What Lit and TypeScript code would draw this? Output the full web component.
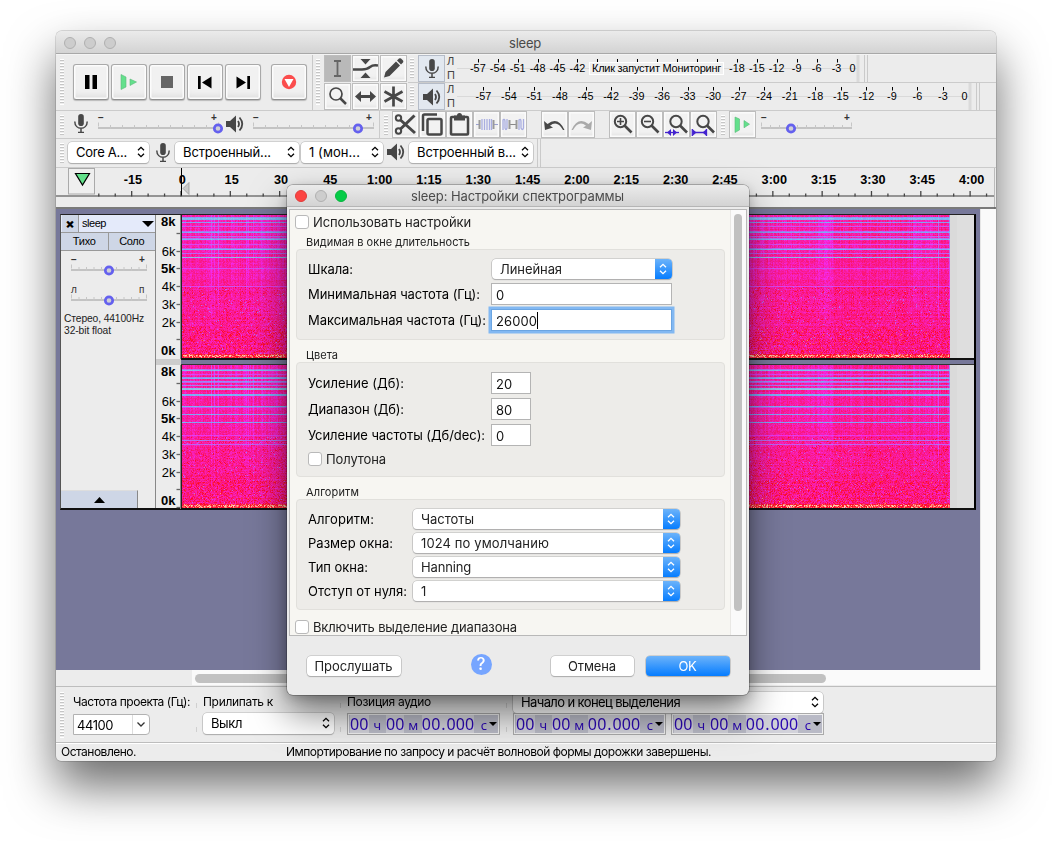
import { LitElement, html, svg, css, nothing } from "lit";
import { customElement, property } from "lit/decorators.js";

/** Text whose tracking is tuned so that it spans the given width. */
const t = (text: string, w: number, cls = "") =>
  html`<span class="fit ${cls}" data-w=${w}>${text}</span>`;

const range = (n: number) => Array.from({ length: n }, (_, i) => i);

const STOPS = [
  [200, 212, 200],
  [115, 178, 246],
  [246, 40, 236],
  [255, 8, 30],
  [255, 245, 200],
];

@customElement("spectro-gram")
class SpectroGram extends LitElement {
  @property({ type: Number }) seed = 1;
  @property({ attribute: false }) bands: number[][] = [];

  static styles = css`
    :host { display: block; width: 768px; height: 143px; }
    canvas { display: block; }
  `;

  render() {
    return html`<canvas width="768" height="143"></canvas>`;
  }

  firstUpdated() {
    const cv = this.renderRoot.querySelector("canvas")!;
    const g = cv.getContext("2d")!;
    const W = 768, H = 143;
    const img = g.createImageData(W, H);
    let s = this.seed * 7919;
    const rnd = () => {
      s = (s * 1664525 + 1013904223) >>> 0;
      return s / 4294967296;
    };
    const col = range(W).map((x) => {
      let v = (rnd() - 0.5) * 0.06;
      if ([29, 32, 36].includes(x)) v -= 0.11;
      if ([49, 64, 66, 71, 79, 80].includes(x)) v -= 0.05;
      if (x > 60 && x < 95) v -= 0.012;
      if (x > 635 && x < 651) v -= 0.035;
      if (x > 651) v += 0.02;
      if (x > 730 && x < 754) v -= 0.025;
      if (x === 756) v -= 0.13;
      if (x > 766) v -= 0.18;
      return v;
    });
    const row = range(H).map(() => (rnd() - 0.5) * 0.045);
    const band = new Map(this.bands.map((b) => [b[0], b[1]]));
    for (let y = 0; y < H; y++) {
      const f = y / H;
      for (let x = 0; x < W; x++) {
        const fade = Math.max(0.2, 1 - f * 0.9);
        let v = 0.572 + f * 0.04 + row[y] + col[x] * (f < 0.7 ? fade * 1.3 : 0.3);
        v += (rnd() - 0.5) * (0.06 + f * 0.06);
        if (band.has(y)) v = band.get(y)! + col[x] * 0.5 + (rnd() - 0.5) * 0.09;
        else if (f > 0.5) {
          const r = rnd();
          if (r > 0.9) v += 0.1;
          if (r < 0.015) v -= 0.2;
        }
        if (f > 0.8 && rnd() > 0.78) v += 0.1 * rnd() + 0.04;
        if (f > 0.97) v += 0.1 + rnd() * 0.1;
        if (y > H - 4 && y < H - 1 && rnd() > 0.55) v += 0.14;
        v = Math.min(0.96, Math.max(0.14, v)) * 4;
        const i = Math.floor(v), k = v - i, o = (y * W + x) * 4;
        for (let c = 0; c < 3; c++)
          img.data[o + c] = STOPS[i][c] * (1 - k) + STOPS[i + 1][c] * k;
        img.data[o + 3] = 255;
      }
    }
    g.putImageData(img, 0, 0);
  }
}

const BANDS_L = [[2, 0.3], [3, 0.2], [4, 0.24], [7, 0.3], [11, 0.42], [16, 0.37], [17, 0.28], [21, 0.4], [23, 0.36], [24, 0.26], [29, 0.44], [33, 0.4], [34, 0.25], [38, 0.4], [42, 0.18], [53, 0.45], [71, 0.45]];
const BANDS_R = [[4, 0.36], [5, 0.2], [9, 0.44], [12, 0.32], [13, 0.26], [16, 0.32], [17, 0.4], [20, 0.35], [23, 0.2], [24, 0.15], [29, 0.24], [30, 0.26], [41, 0.25], [42, 0.42], [49, 0.27], [57, 0.27], [70, 0.47], [75, 0.37], [79, 0.4]];

const MIC = svg`<rect x="4.2" y="0" width="5.6" height="12" rx="2.8"/><path d="M.8 7.5c0 9 12.4 9 12.4 0M7 14v4M4 18.6h6" fill="none" stroke="currentColor" stroke-width="1.5"/>`;
const SPK = svg`<path d="M0 6h4l6-5.5v17L4 12H0z"/><path d="M12 6q2 3 0 6M13.5 2.5q5.500 6.500 0 13" fill="none" stroke="currentColor" stroke-width="1.8"/>`;
const mic = (c = "") => html`<svg class="ic ${c}" width="14" height="19" viewBox="0 0 14 19" fill="currentColor">${MIC}</svg>`;
const spk = (c = "") => html`<svg class="ic ${c}" width="18" height="18" viewBox="0 0 18 18" fill="currentColor">${SPK}</svg>`;
const ic = (body: unknown) => html`<svg class="ic" width="25" height="25" viewBox="0 0 25 25" fill="currentColor">${body}</svg>`;
const lens = svg`<circle cx="10.500" cy="9.500" r="5.700" fill="none" stroke="currentColor" stroke-width="2"/><path d="M14.500 13.500l7 7" stroke="currentColor" stroke-width="2.600"/>`;

const TOOLS = [
  svg`<path d="M9 5h7M12.500 5v15M9 20h7" fill="none" stroke="currentColor" stroke-width="1.800"/>`,
  svg`<path d="M7.500 3h10l-5 5.500zM7.500 22h10l-5-5.500z"/><path d="M0 13.500h9q5 0 8-2.500t8-1.500" fill="none" stroke="currentColor" stroke-width="2.500"/>`,
  svg`<path d="M3 21.500l1.500-5.500L15 5.500l4 4L8.500 20zM16 4.500l2-2q1-.7 2 0l2 2q.7 1 0 2l-2 2z"/>`,
  svg`<circle cx="11" cy="10" r="6" fill="none" stroke="currentColor" stroke-width="1.700"/><path d="M15 14l6 6" stroke="currentColor" stroke-width="2.500"/>`,
  svg`<path d="M2 12.500l6-5.500v4h9V7l6 5.500-6 5.500v-4H8v4z"/>`,
  svg`<path d="M12.500 2.500v20M3.500 7.500l18 10M21.500 7.500l-18 10" stroke="currentColor" stroke-width="2.700"/>`,
];

const EDIT = [
  svg`<g fill="none" stroke="currentColor"><circle cx="5.500" cy="6" r="2.700" stroke-width="2"/><circle cx="5.500" cy="19" r="2.700" stroke-width="2"/><path d="M7.500 8l14.500 13M7.500 17L21.500 3.500" stroke-width="3"/></g>`,
  svg`<g fill="none" stroke="currentColor" stroke-width="2.500"><rect x="7.500" y="7" width="14" height="15.500" rx="1.500"/><path d="M3 19V4q0-1.500 1.500-1.500H17"/></g>`,
  svg`<rect x="4" y="5" width="17" height="17.500" rx="1" fill="none" stroke="currentColor" stroke-width="2.500"/><path d="M7 3.500h3q0-2.500 2.500-2.500t2.500 2.500h3v5H7z"/>`,
  svg`<path d="M2 12.500h4M19 12.500h5" stroke="#9aa0d0"/><path d="M5.500 8v9M19.500 8v9" stroke="#999" stroke-width="2"/><path d="M8 7v11M10.500 7v11M13 7v11M15.500 7v11M17.500 7v11" stroke="#a9aee0" stroke-width="1.300"/>`,
  svg`<path d="M9 12.500h6" stroke="#888"/><path d="M8.500 8v9M15.500 8v9" stroke="#999" stroke-width="2"/><path d="M2 18V8q2-2 2 2v6q1 3 2 0V7M18 18V8q2-2 2 2v6q1.500 3 2.500 0V7" fill="none" stroke="#a9aee0" stroke-width="1.300"/>`,
];
const UNDO = svg`<path d="M2 9l1 9 8-2.500-3-1.700q7-6 13 4.200h1.500Q16 4 5.500 12z"/>`;
const REDO = svg`<path fill="#aaa" d="M23 9l-1 9-8-2.500 3-1.700q-7-6-13 4.200H2.500Q9 4 19.500 12z"/>`;
const ZOOM = [
  svg`${lens}<path d="M7 9.500h7M10.500 6v7" stroke="currentColor" stroke-width="1.600"/>`,
  svg`${lens}<path d="M7 9.500h7" stroke="currentColor" stroke-width="1.600"/>`,
  svg`<g transform="translate(1.500)">${lens}</g><g fill="#4322cf"><path d="M1 20.500h14" stroke="#4322cf" stroke-width="1.300"/><path d="M7 17v7L3 20.500zM9 17v7l4-3.500z"/></g>`,
  svg`<g transform="translate(1.500)">${lens}</g><g fill="#4322cf"><path d="M2 20.500h12M1.300 17v7M15.500 17v7" stroke="#4322cf" stroke-width="1.300"/><path d="M2 17.500l3.500 3L2 23.500zM15 17.500l-3.500 3 3.500 3z"/></g>`,
];
const PLAYSPEED = svg`<path fill="#63e08c" stroke="#5ab878" stroke-width=".6" d="M5 5l4.500 2v11L5 20.500zM14 8.500l5.500 3.700-5.500 3.600z"/>`;

const slider = (w: number, pos: number, n: number, minus = "−", plus = "+", cls = "") => html`
  <svg class="slider ${cls}" width=${w + 12} height="26" viewBox="-6 0 ${w + 12} 26">
    <text x="0" y="9.500" class="pm">${minus}</text>
    <text x=${w - 8} y="9.500" class="pm">${plus}</text>
    <path d="M0 17H${w}" stroke="#c3c3c3" stroke-width="2"/>
    ${range(n).map((i) => svg`<path d="M${0.5 + (i * (w - 1)) / (n - 1)} ${i % (n - 1) ? 14 : 11.5}v4" stroke="#c6c6c6"/>`)}
    <circle cx=${pos} cy="17.500" r="3.700" fill="#cfcfd8" stroke="#6460ee" stroke-width="2.700"/>
  </svg>`;

const chev = html`<svg class="chev" width="8" height="12" viewBox="0 0 8 12"><path d="M1 4.300L4 1.300l3 3M1 7.700l3 3 3-3" fill="none" stroke="currentColor" stroke-width="1.300"/></svg>`;
const popup = (w: number, text: string, tw: number, cls = "") => html`
  <div class="popup ${cls}" style="width:${w}px">${t(text, tw)}<i></i>${chev}</div>`;
const blueSelect = (w: number, text: string, tw: number) => html`
  <div class="bsel" style="width:${w}px">${t(text, tw)}<i></i><b>${chev}</b></div>`;

const meter = (w: number, zero: number, pitch: number, hidden: boolean) => html`
  <svg class="meter" width=${w} height="27">
    <path d="M0 13.500H${w}" stroke="#d9d9d9"/>
    ${range(20).map((i) => {
      const x = zero - (19 - i) * pitch;
      const v = (i - 19) * 3;
      return svg`<path d="M${Math.round(x) + 0.5} 4v${i === 19 ? 5 : 3.500}" stroke="#000"/>
        ${hidden && v > -42 && v < -18 ? nothing : svg`<text x=${v ? x : x - 4} y="16.500" text-anchor="middle">${v}</text>`}`;
    })}
    <path d="M${w} 0v27" stroke="#dadada" stroke-width="3"/>
  </svg>`;

const timeField = () => html`
  <div class="time">${[..."00ч00м00.000с"].map((c) =>
    /[чмс]/.test(c) ? html`<span class="u">${c}</span>` : html`<span class=${c === "." ? "dot" : "d"}>${c}</span>`)}<em></em></div>`;

const vruler = (ys: number[], ticks: number[]) => html`
  <svg class="vr" width="25" height="144">
    ${ys.map((y, i) => svg`<text x="19.500" y=${y + 4} text-anchor="end" class=${i === 0 || i === 2 || i === 6 ? "b" : ""}>${["8k", "6k", "5k", "4k", "3k", "2k", "0k"][i]}</text>`)}
    ${ticks.map((y) => svg`<path d="M20.500 ${y + 0.5}h4" stroke="#666" stroke-width="1.300"/>`)}
    <path d="M24.500 0v144" stroke="#888"/>
  </svg>`;

const check = (text: string, w: number, cls = "") => html`<div class="check ${cls}"><i></i>${t(text, w)}</div>`;

@customElement("app-root")
class AppRoot extends LitElement {
  static styles = css`
    :host { display: block; position: relative; width: 1052px; height: 841px; overflow: hidden; background: #fff; font: 13px/16px Inter, "Noto Sans", sans-serif; color: #000; }
    * { box-sizing: border-box; }
    .fit { display: inline-block; white-space: pre; }
    svg { display: block; flex: none; }
    .win { display: flex; flex-direction: column; width: 940px; height: 730px; margin: 31px 56px; border-radius: 6px 6px 5px 5px; background: #ececec; box-shadow: 0 0 0 .7px rgba(0,0,0,.18), 0 25px 48px rgba(0,0,0,.58); }
    :host::before { content: ""; display: table; }
    .tb { height: 23px; flex: none; display: flex; align-items: center; background: linear-gradient(#ebebeb, #d3d3d3); border-bottom: 1px solid #a8a8a8; border-radius: 6px 6px 0 0; padding-left: 8px; color: #4a4a4a; }
    .win > .tb { padding-top: 2px; }
    .tb .dot3 { width: 12px; height: 12px; border-radius: 50%; background: #cdcdcd; border: 1px solid #b0b0b0; margin-right: 8px; }
    .tb .ttl { margin-left: 385px; line-height: 22px; }
    .grip { flex: none; width: 4px; background: repeating-linear-gradient(#fff 0 1px, #c6c6c6 1px 2px, #ececec 2px 3px); }
    .ic { color: #474747; }
    .row { display: flex; flex: none; border-bottom: 1px solid #cbcbcb; }
    .r1 { height: 57px; border-top: 1px solid #f4f4f4; }
    .transport { width: 257px; display: flex; border-right: 1px solid #c8c8c8; padding-left: 4px; flex: none; }
    .transport .grip { height: 46px; margin: 4px 9px 0 0; }
    .big { width: 36px; height: 36px; margin: 9px 2px 0 0; border-radius: 3px; border: 1px solid #a9a9a9; border-bottom-color: #8f8f8f; background: #f1f1f1; box-shadow: inset 0 0 0 1.500px #fcfcfc, inset 0 -6px 6px -3px #dcdcdc, 0 1px 1px #bbb; display: flex; align-items: center; justify-content: center; }
    .big.rec { margin-left: 8px; }
    .tools { display: flex; padding-left: 3px; width: 95px; flex: none; }
    .tools .grip { height: 46px; margin: 4px 4px 0 0; }
    .tgrid { display: grid; grid-template-columns: repeat(3, 28px); grid-auto-rows: 28px; }
    .btn { width: 27px; height: 27px; border: 1px solid #bdbdbd; background: #f2f2f2; box-shadow: inset 0 0 0 1.500px #fbfbfb, inset 0 -4px 5px -2px #dedede; display: flex; align-items: center; justify-content: center; flex: none; }
    .btn.on { background: #b9b9b9; box-shadow: none; }
    .btn.on .ic { color: #666; }
    .meters { flex: 1; display: flex; flex-direction: column; }
    .mrow { height: 28px; display: flex; border-bottom: 1px solid #cbcbcb; position: relative; }
    .mrow:last-child { border: 0; }
    .mrow .grip { height: 21px; margin: 3px 4px 0 2px; }
    .mrow .btn { background: #e2e8f0; box-shadow: none; border-color: #b5bcc8; margin-right: 1px; }
    .lp { display: flex; flex-direction: column; justify-content: space-between; width: 11px; padding: 0 0 1px 1px; font: 11px/12px "Liberation Sans", sans-serif; color: #444; }
    .meter text { font: 10.800px "Liberation Sans", sans-serif; letter-spacing: .1px; }
    .meter { overflow: visible; }
    .hint { position: absolute; left: 181px; top: 7px; width: 135px; height: 13px; background: #f0f0f0; border: 1px solid #fff; font: 11px/11px "Liberation Sans", sans-serif; padding-left: 2px; }
    .ends { width: 4px; border: 1px solid #cacaca; border-width: 0 1px; margin-left: 6px; }
    .r2 { height: 28px; }
    .r2 .grip, .r3 .grip { height: 21px; margin: 4px 0 0 4px; }
    .slider { margin: 0 -6px; }
    .slider .pm { font: bold 10px "Liberation Sans", sans-serif; fill: #333; }
    .slider.pan .pm { font-weight: normal; }
    .r3 { height: 29px; }
    .popup { height: 21px; flex: none; border-radius: 4px; background: #fff; box-shadow: 0 0 0 .6px #b5b5b5, 0 1px 1px #a5a5a5; display: flex; align-items: center; padding: 0 4px 1px 8px; line-height: 20px; }
    .popup i, .bsel i { flex: 1; }
    .r3 .popup { margin-top: 3px; }
    .ruler { flex: none; height: 41px; display: block; }
    .ruler text { font: bold 12.700px "Liberation Sans", sans-serif; }
    .area { flex: none; height: 461px; display: flex; background: #77789a; }
    .tracks { width: 924px; padding: 5px 0 0 4px; }
    .vs { flex: 1; background: #fafafa; border-left: 1px solid #e6e6e6; }
    .track { width: 916px; height: 296px; border: 1px solid #222; border-right: 2px solid #000; border-left-color: #555; border-bottom: 2px solid #111; display: flex; background: #ececec; }
    .panel { width: 95px; flex: none; border-right: 1px solid #888; display: flex; flex-direction: column; font-family: "Liberation Sans", sans-serif; }
    .ph { height: 18px; display: flex; border-bottom: 1px solid #999; background: #e4eafa; padding-left: 1px; font-size: 11px; align-items: center; }
    .ph b { width: 17px; height: 17px; text-align: center; background: #ced6e6; border-right: 1px solid #999; font: 900 13px/17px Inter, sans-serif; }
    .ph .fit { margin-left: 3px; line-height: 15px; padding-bottom: 1px; }
    .ph svg { margin-left: auto; margin-right: 1px; }
    .ms { height: 18px; display: flex; border-bottom: 1px solid #999; background: #ced6e6; font-size: 11px; line-height: 17px; }
    .ms div { flex: 1; text-align: center; }
    .ms div + div { border-left: 1px solid #999; }
    .panel .slider { margin: 2px 0 0 4px; }
    .panel .slider + .slider { margin-top: 4px; }
    .info { font-size: 10.300px; line-height: 12px; padding: 4px 0 0 3px; color: #222; }
    .coll { margin-top: auto; width: 77px; height: 18px; background: #ced6e6; border-right: 1px solid #888; border-top: 1px solid #ddd; display: flex; align-items: center; justify-content: center; }
    .vrc { width: 25px; flex: none; }
    .vr text { font: 13px "Liberation Sans", sans-serif; }
    .vr text.b { font-weight: bold; }
    .gapv { height: 7px; background: #77789a; border-top: 2px solid #111; border-bottom: 1px solid #333; }
    .ch { display: flex; background: linear-gradient(90deg, #dadada 775px, #dedede 775px); height: 143px; border-left: 1px solid #222; }
    .hs { flex: none; height: 16px; padding-left: 136px; }
    .hs div { background: #fafafa; height: 15px; padding: 4px 3px; }
    .hs i { display: block; width: 631px; height: 8.500px; border-radius: 5px; background: #c1c1c1; }
    .sel { flex: none; height: 57px; border-top: 1px solid #bdbdbd; border-bottom: 1px solid #bdbdbd; display: flex; padding-left: 4px; font-size: 12px; }
    .sel > .grip { height: 46px; margin: 5px 9px 0 0; }
    .sel .popup, .combo { font-size: 13px; }
    .col { display: flex; flex-direction: column; flex: none; }
    .col > .fit { line-height: 15px; margin-top: 7px; align-self: flex-start; }
    .combo { width: 77px; height: 21px; margin-top: 5px; border: 1px solid #b2b2b2; border-radius: 0 4px 4px 0; background: #fff; display: flex; align-items: center; padding-left: 3px; }
    .combo b { margin-left: auto; width: 17px; height: 19px; border-left: 1px solid #ddd; display: flex; align-items: center; justify-content: center; }
    .sep { flex: none; width: 1px; height: 29px; margin-top: 16px; border-top: 5px solid #d0d0d0; border-bottom: 5px solid #d0d0d0; }
    .time { width: 153px; height: 22px; border: 1px solid #aaa; background: #b9bac6; box-shadow: inset 0 0 0 1px #f0f0f0; display: flex; align-items: center; padding: 0 0 0 2px; font: 16px/19px "Noto Sans", sans-serif; color: #2a07b0; }
    .time span { text-align: center; height: 18px; line-height: 18px; flex: none; }
    .time .d { width: 9.300px; background: #d2d2da; }
    .time .dot { width: 6px; background: #d2d2da; }
    .time .u { width: 17.300px; font-size: 13px; line-height: 20px; }
    .time .u:nth-last-child(2) { width: 15px; text-align: right; padding-right: 2px; }
    .time em { flex: none; border: 4px solid transparent; border-top: 4px solid #000; border-bottom: 0; }
    .times { display: flex; gap: 5px; margin-top: 1px; }
    .status { flex: 1; border-top: 1px solid #fff; display: flex; font-size: 12px; line-height: 15px; padding-left: 5px; }
    .s2 { margin-left: 150px; }

    .dlg { position: absolute; left: 287px; top: 185px; width: 462px; height: 510px; border-radius: 6px; background: #ebebeb; box-shadow: 0 0 0 .7px rgba(0,0,0,.3), 0 18px 36px rgba(0,0,0,.5), 0 3px 12px rgba(0,0,0,.2); display: flex; flex-direction: column; }
    .dlg .tb { height: 22px; border-color: #b5b5b5; }
    .dlg .tb .dot3:nth-child(1) { background: #fc4442; border-color: #e03c3a; }
    .dlg .tb .dot3:nth-child(3) { background: #05cc47; border-color: #08b53f; }
    .dlg .tb .ttl { margin-left: 56px; }
    .view { margin: 2px 2px 0 2px; height: 427px; border: 1px solid #b8b8b8; display: flex; background: #f7f6f2; overflow: hidden; flex: none; }
    .cont { width: 441px; padding: 5px 5px 0 5px; border-right: 1px solid #e9e8e5; flex: none; }
    .lane { flex: 1; background: #fafafa; padding: 4px 0 0 3px; }
    .lane i { display: block; width: 8px; height: 397px; border-radius: 4px; background: #c1c1c1; }
    .check { display: flex; height: 14px; line-height: 15px; color: #222; }
    .check i { width: 14px; height: 14px; border-radius: 3px; background: #fff; border: 1px solid #b9b9b9; margin-right: 4px; }
    .cap { font-size: 11px; line-height: 14px; margin: 6px 0 0 11px; height: 14px; color: #222; }
    .cap.n { margin-top: 8px; }
    .grp { margin-left: 1px; background: #edece9; border: 1px solid #e1e0dc; border-radius: 4px; padding: 9px 0 0 11px; }
    .g1 { height: 91px; } .g2 { height: 115px; } .g3 { height: 111px; }
    .f { display: grid; grid-template-columns: 183px auto; justify-content: start; justify-items: start; align-items: center; height: 22px; margin-bottom: 4px; }
    .f.s { height: 21px; margin-bottom: 3px; align-items: start; line-height: 20px; }
    .g1 .bsel { margin-left: .5px; }
    .g3 .f { grid-template-columns: 104.500px auto; }
    .bsel { height: 20px; border-radius: 4px; background: #fff; box-shadow: 0 0 0 .6px #b5b5b5, 0 1px 1px #a5a5a5; display: flex; align-items: center; padding-left: 8.500px; color: #222; }
    .bsel b { width: 17px; height: 20.500px; border-radius: 0 4px 4px 0; background: linear-gradient(#6cb3fa, #067dff); color: #fff; display: flex; align-items: center; justify-content: center; }
    .inp { height: 22px; border: 1px solid #b4b4b4; background: #fff; line-height: 22px; padding-left: 4px; color: #111; display: flex; }
    .w181 { width: 181px; } .w40 { width: 40px; }
    .focus { border-color: #6ba5e2; box-shadow: 0 0 0 2.500px #82b8f2; }
    .caret { width: 1px; height: 17px; background: #000; margin-top: 2px; }
    .foot { display: flex; padding: 20px 19px 0 19.500px; height: 41px; }
    .pb { height: 20px; border-radius: 4px; background: #fff; box-shadow: 0 0 0 .6px #b5b5b5, 0 1px 1px #a5a5a5; display: flex; align-items: center; justify-content: center; color: #222; line-height: 20px; }
    .pb.ok { background: linear-gradient(#6cb3fa, #057cff); color: #fff; margin-left: 12px; width: 84px; }
    .help { width: 21px; height: 21px; border-radius: 50%; background: #76a5ff; color: #fff; font-size: 17px; line-height: 21px; text-align: center; margin: -2px 58px 0 70px; font-weight: 500; }
  `;

  async firstUpdated() {
    await document.fonts.ready;
    this.renderRoot.querySelectorAll<HTMLElement>(".fit").forEach((el) => {
      const n = (el.textContent || "").length;
      const d = Number(el.dataset.w) - el.getBoundingClientRect().width;
      if (n > 1) el.style.letterSpacing = (d / n).toFixed(3) + "px";
    });
  }

  renderRuler() {
    return html`<svg class="ruler" width="940" height="41">
      <path d="M0 28H939" stroke="#777" stroke-width="1.500"/>
      ${range(57).map((i) => {
        const x = 125.8 + (i - 5) * 16.44 - 0.8;
        return x < 10 ? nothing : svg`<path d="M${x} ${(i - 5) % 3 ? 25.5 : 23}V28.5" stroke="#444" stroke-width="1.300"/>`;
      })}
      ${range(18).map((i) => {
        const s = (i - 1) * 15;
        const l = s < 60 ? String(s) : `${Math.floor(s / 60)}:${String(s % 60).padStart(2, "0")}`;
        return svg`<text x=${77 + i * 49.33} y="15.800" text-anchor="middle">${l}</text>`;
      })}
      <rect x="12.500" y=".5" width="26" height="25.500" fill="#efefef" stroke="#aaa"/>
      <path d="M19.500 5.500h14L26.500 17z" fill="#62e08a" stroke="#000" stroke-width="1.200"/>
      <path d="M133 14.500v12l-6-6z" fill="#c9c9c9" stroke="#999" stroke-width=".8"/>
      <path d="M125.500 0v27.500" stroke="#000"/>
      <path d="M938.500 0v41" stroke="#bbb"/>
      <path d="M0 40H940" stroke="#555" stroke-width="1.500"/>
    </svg>`;
  }

  render() {
    return html`
      <div class="win">
        <div class="tb"><span class="dot3"></span><span class="dot3"></span><span class="dot3"></span>${t("sleep", 32, "ttl")}</div>
        <div class="row r1">
          <div class="transport">
            <div class="grip"></div>
            <div class="big"><svg width="12" height="14"><path d="M0 0h4.500v14H0zM7.500 0H12v14H7.500z"/></svg></div>
            <div class="big"><svg width="18" height="16"><path fill="#63e08c" stroke="#5ab878" stroke-width=".6" d="M1 .5L6 3v10L1 15.500zM10 5l6.500 3-6.500 3.500z"/></svg></div>
            <div class="big"><svg width="12" height="12"><path fill="#666" d="M0 0h12v12H0z"/></svg></div>
            <div class="big"><svg width="14" height="13"><path d="M0 0h2.700v13H0zM13.500 .5v12L4 6.500z"/></svg></div>
            <div class="big"><svg width="14" height="13"><path d="M11.300 0H14v13h-2.700zM.5 .5v12L10 6.500z"/></svg></div>
            <div class="big rec"><svg width="16" height="16"><circle cx="8" cy="8" r="7.200" fill="#fb4d4d"/><path d="M3.500 5h9L8 13z" fill="#fff"/></svg></div>
          </div>
          <div class="tools">
            <div class="grip"></div>
            <div class="tgrid">${TOOLS.map((b, i) => html`<div class="btn ${i ? "" : "on"}">${ic(b)}</div>`)}</div>
          </div>
          <div class="meters">
            <div class="mrow"><div class="grip"></div><div class="btn">${mic()}</div><div class="lp"><span>Л</span><span>П</span></div>${meter(401, 399.5, 19.93, true)}<div class="ends"></div><div class="hint">${t("Клик запустит Мониторинг", 129)}</div></div>
            <div class="mrow"><div class="grip"></div><div class="btn">${spk()}</div><div class="lp"><span>Л</span><span>П</span></div>${meter(513, 511.5, 25.53, false)}<div class="ends"></div></div>
          </div>
        </div>
        <div class="row r2">
          <div class="grip"></div>
          <div style="margin:3px 10px 0 10px">${mic()}</div>
          ${slider(121, 120, 11)}
          <div style="margin:4px 9px 0 7px">${spk()}</div>
          ${slider(121, 105, 11)}
          <div style="border-left:1px solid #cbcbcb;margin-left:5px"></div>
          <div class="grip"></div><div style="width:4px"></div>
          ${EDIT.map((b) => html`<div class="btn">${ic(b)}</div>`)}
          <div style="width:14px"></div>
          <div class="btn">${ic(UNDO)}</div><div class="btn">${ic(REDO)}</div>
          <div style="width:14px"></div>
          ${ZOOM.map((b) => html`<div class="btn">${ic(b)}</div>`)}
          <div class="grip"></div><div style="width:4px"></div>
          <div class="btn">${ic(PLAYSPEED)}</div>
          <div style="width:5px"></div>
          ${slider(91, 30, 11)}
        </div>
        <div class="row r3">
          <div class="grip"></div><div style="width:4px"></div>
          ${popup(81, "Core A...", 51)}
          <div style="margin:4px 5px 0 7px">${mic()}</div>
          ${popup(124, "Встроенный...", 88)}<div style="width:2px"></div>
          ${popup(82, "1 (мон...", 51)}
          <div style="margin:4px 4px 0 4px">${spk()}</div>
          ${popup(124, "Встроенный в...", 99)}
          <div class="ends" style="margin-left:4px"></div>
        </div>
        ${this.renderRuler()}
        <div class="area">
          <div class="tracks">
            <div class="track">
              <div class="panel">
                <div class="ph"><b>×</b>${t("sleep", 24)}<svg width="12" height="6"><path d="M0 0h12L6 6z"/></svg></div>
                <div class="ms"><div>${t("Тихо", 23)}</div><div>${t("Соло", 25)}</div></div>
                ${slider(76, 38, 11)}
                ${slider(76, 38, 11, "л", "п", "pan")}
                <div class="info">${t("Стерео, 44100Hz", 80)}<br>${t("32-bit float", 47)}</div>
                <div class="coll"><svg width="11" height="6"><path d="M0 6h11L5.500 0z"/></svg></div>
              </div>
              <div class="vrc">
                ${vruler([7, 36.5, 53.5, 71.5, 89.5, 107.5, 136], [18, 36, 53, 71, 89, 107, 124])}
                <div style="height:6px;background:#ccc"></div>
                ${vruler([7, 36.5, 53.5, 71.5, 89.5, 107.5, 136], [18, 36, 53, 71, 89, 107, 124, 142])}
              </div>
              <div style="flex:1">
                <div class="ch"><spectro-gram .seed=${3} .bands=${BANDS_L}></spectro-gram></div>
                <div class="gapv"></div>
                <div class="ch"><spectro-gram .seed=${11} .bands=${BANDS_R}></spectro-gram></div>
              </div>
            </div>
          </div>
          <div class="vs"></div>
        </div>
        <div class="hs"><div><i></i></div></div>
        <div class="sel">
          <div class="grip"></div>
          <div class="col">${t("Частота проекта (Гц):", 117)}
            <div class="combo">${t("44100", 36)}<b><svg width="8" height="5"><path d="M.5 .5L4 4 7.500 .5" fill="none" stroke="#333" stroke-width="1.300"/></svg></b></div></div>
          <div class="sep" style="margin-left:6px;margin-right:6px"></div>
          <div class="col">${t("Прилипать к", 70)}<div style="height:4px"></div>${popup(131, "Выкл", 31, "snap")}</div>
          <div class="sep" style="margin-left:6px;margin-right:6px"></div>
          <div class="col">${t("Позиция аудио", 84)}<div class="times" style="margin-top:4px">${timeField()}</div></div>
          <div class="sep" style="margin-left:6px;margin-right:6px"></div>
          <div class="col"><div style="height:5px"></div>${popup(310, "Начало и конец выделения", 159)}
            <div class="times" style="margin-top:0">${timeField()}${timeField()}</div></div>
        </div>
        <div class="status">${t("Остановлено.", 75)}${t("Импортирование по запросу и расчёт волновой формы дорожки завершены.", 425, "s2")}</div>
      </div>

      <div class="dlg">
        <div class="tb"><span class="dot3"></span><span class="dot3"></span><span class="dot3"></span>${t("sleep: Настройки спектрограммы", 213, "ttl")}</div>
        <div class="view">
          <div class="cont">
            ${check("Использовать настройки", 158)}
            <div class="cap">${t("Видимая в окне длительность", 164)}</div>
            <div class="grp g1">
              <div class="f s">${t("Шкала:", 45)}${blueSelect(180, "Линейная", 62)}</div>
              <div class="f">${t("Минимальная частота (Гц):", 172)}<div class="inp w181">0</div></div>
              <div class="f">${t("Максимальная частота (Гц):", 178)}<div class="inp w181 focus">${t("26000", 41)}<div class="caret"></div></div></div>
            </div>
            <div class="cap n">${t("Цвета", 32)}</div>
            <div class="grp g2">
              <div class="f">${t("Усиление (Дб):", 96)}<div class="inp w40">20</div></div>
              <div class="f">${t("Диапазон (Дб):", 96)}<div class="inp w40">80</div></div>
              <div class="f">${t("Усиление частоты (Дб/dec):", 177)}<div class="inp w40">0</div></div>
              <div style="height:2px"></div>
              ${check("Полутона", 60)}
            </div>
            <div class="cap n">${t("Алгоритм", 53)}</div>
            <div class="grp g3">
              <div class="f s">${t("Алгоритм:", 66)}${blueSelect(267, "Частоты", 53)}</div>
              <div class="f s">${t("Размер окна:", 85)}${blueSelect(267, "1024 по умолчанию", 128)}</div>
              <div class="f s">${t("Тип окна:", 60)}${blueSelect(267, "Hanning", 50)}</div>
              <div class="f s">${t("Отступ от нуля:", 99)}${blueSelect(267, "1", 7)}</div>
            </div>
            <div style="height:10px"></div>
            ${check("Включить выделение диапазона", 204)}
          </div>
          <div class="lane"><i></i></div>
        </div>
        <div class="foot">
          <div class="pb" style="width:94px">${t("Прослушать", 78)}</div>
          <div class="help">?</div>
          <div class="pb" style="width:83px;margin-left:1px">${t("Отмена", 48)}</div>
          <div class="pb ok">${t("OK", 18)}</div>
        </div>
      </div>`;
  }
}
